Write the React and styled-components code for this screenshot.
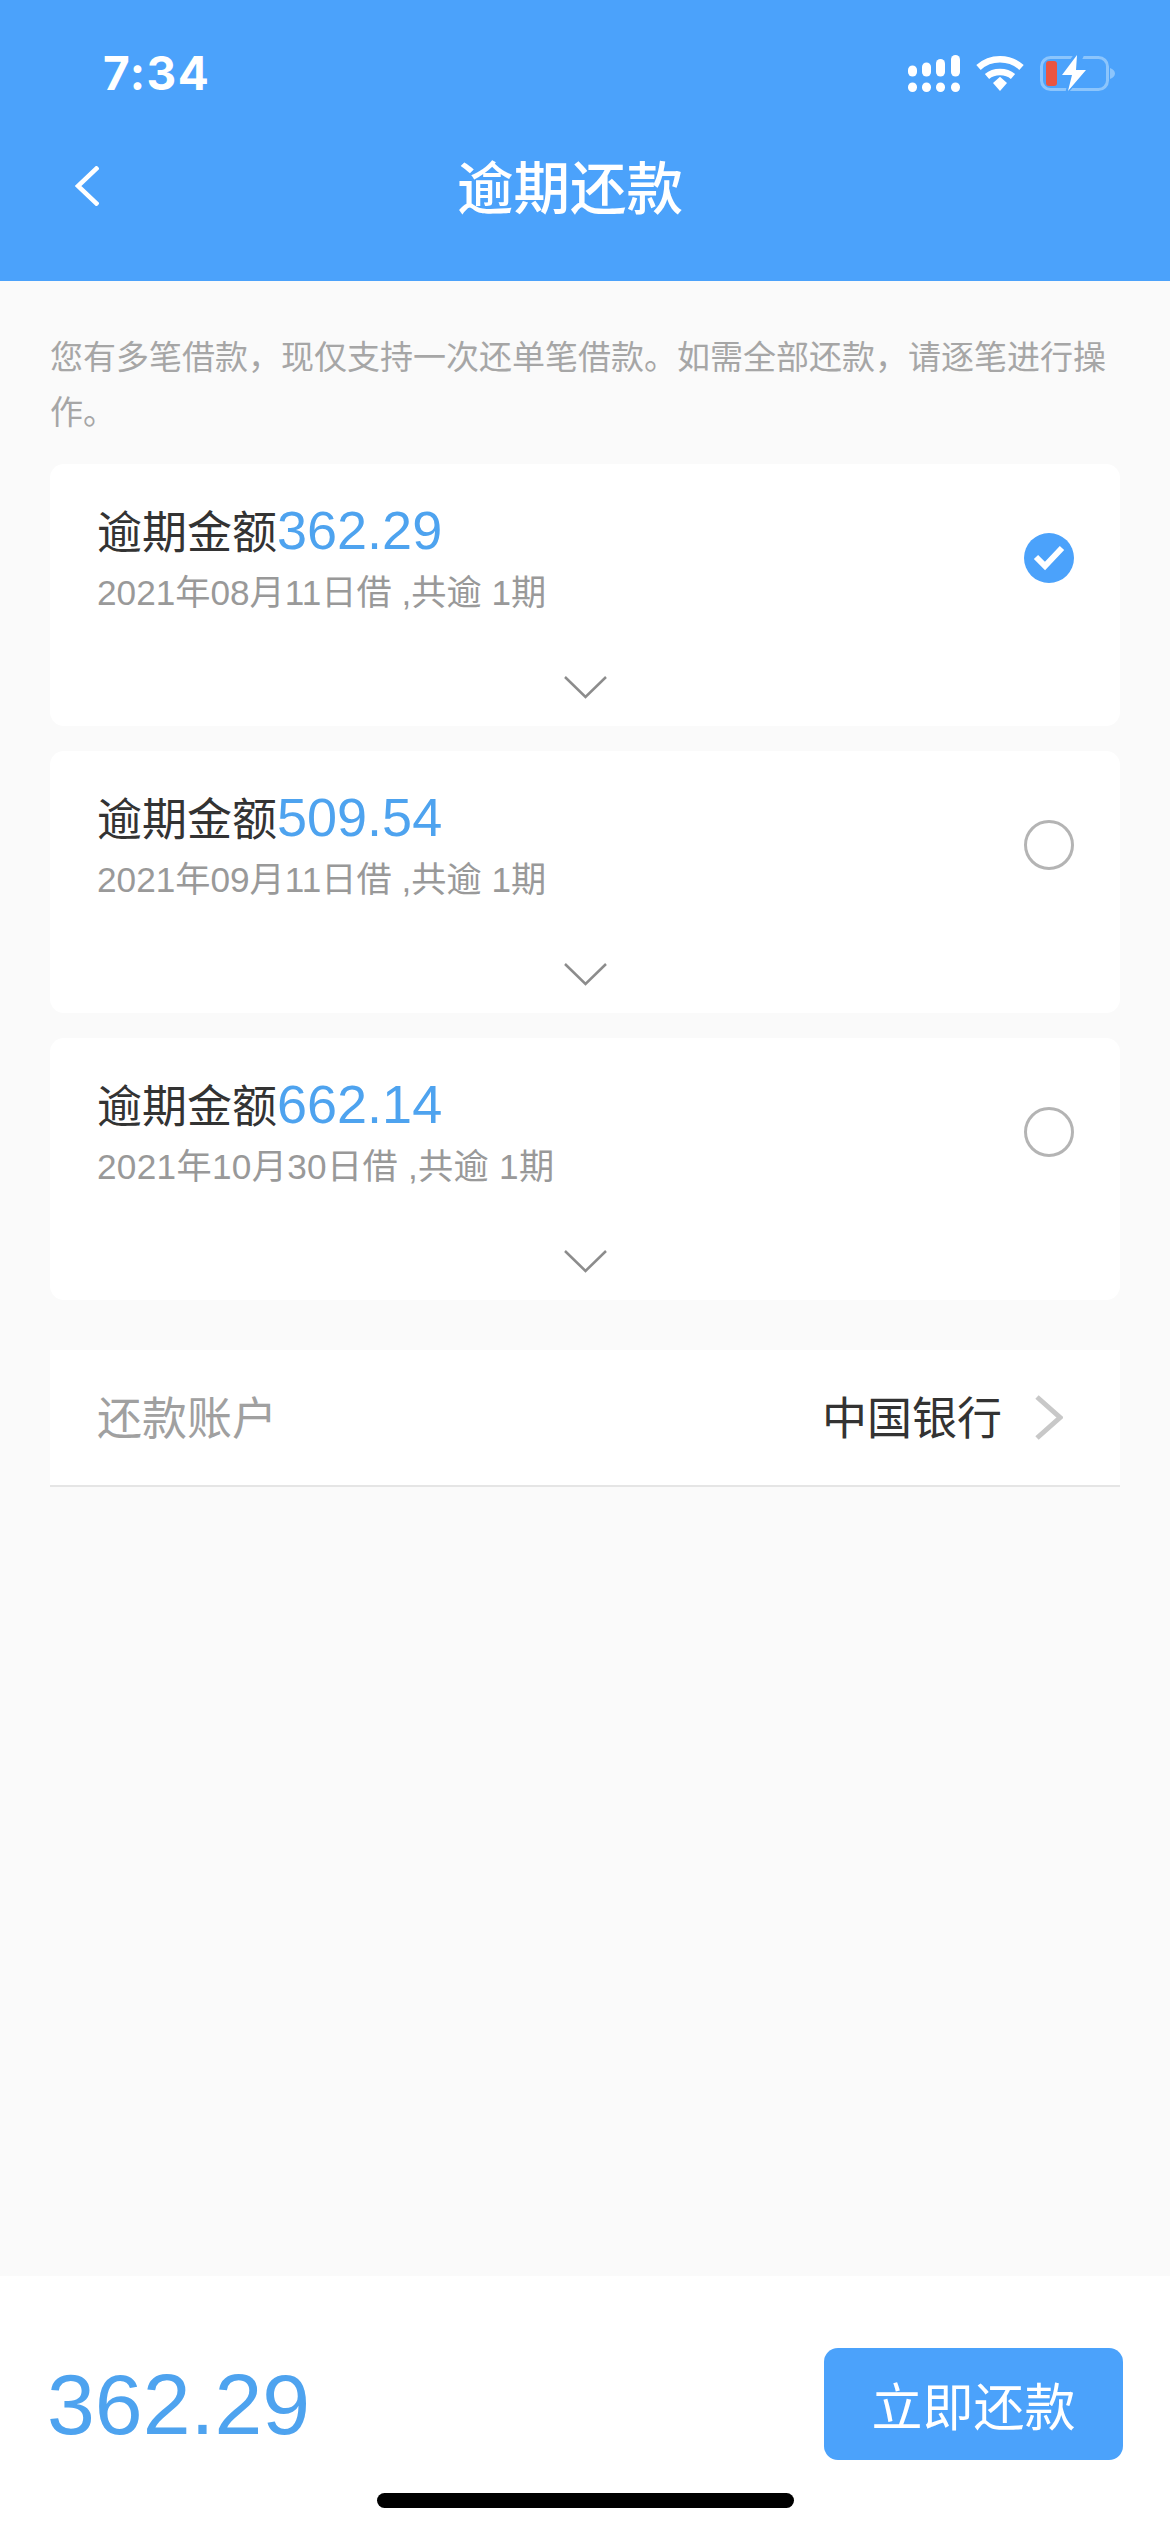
import React from 'react';
import styled, { createGlobalStyle } from 'styled-components';

const blue = '#4ba2fb';

const GlobalStyle = createGlobalStyle`
    html, body {
        margin: 0;
        padding: 0;
        background: #fafafa;
    }
    * {
        box-sizing: border-box;
    }
`;

const Page = styled.div`
    width: 1170px;
    height: 2532px;
    display: flex;
    flex-direction: column;
    background: #fafafa;
    font-family: "Liberation Sans", "Noto Sans CJK SC", sans-serif;
    overflow: hidden;
`;

const Header = styled.header`
    height: 281px;
    flex: none;
    background: ${blue};
    color: #fff;
`;

const StatusBar = styled.div`
    height: 160px;
    padding: 50px 55px 0 103px;
    display: flex;
    justify-content: space-between;
    align-items: flex-start;
`;

const Time = styled.div`
    font-family: Inter, "Liberation Sans", sans-serif;
    font-weight: 700;
    font-size: 46px;
    letter-spacing: 1.5px;
    line-height: 47px;
`;

const StatusIcons = styled.div`
    display: flex;
    align-items: center;
    gap: 16px;
    padding-top: 4px;
`;

const NavBar = styled.div`
    display: flex;
    align-items: center;
    height: 52px;
    padding-left: 75px;
    gap: 358px;
`;

const NavTitle = styled.h1`
    margin: -5px 0 0;
    font-size: 56.5px;
    line-height: 52px;
    font-weight: 500;
    font-family: "Noto Sans CJK SC", sans-serif;
`;

const Main = styled.main`
    flex: 1;
    padding: 47px 50px 0;
`;

const Notice = styled.p`
    margin: 0 0 26px;
    font-family: "Noto Sans CJK SC", sans-serif;
    font-size: 33px;
    line-height: 55px;
    color: #a6a6a6;
`;

const CardList = styled.div`
    display: flex;
    flex-direction: column;
    gap: 25px;
`;

const Card = styled.section`
    height: 262px;
    background: #fff;
    border-radius: 14px;
    padding: 36px 47px 0;
    display: flex;
    flex-direction: column;
`;

const CardRow = styled.div`
    display: flex;
    justify-content: space-between;
    align-items: center;
`;

const AmountLine = styled.div`
    font-size: 45px;
    line-height: 60px;
    color: #333;
    font-family: "Noto Sans CJK SC", sans-serif;
`;

const AmountValue = styled.span`
    font-family: "Liberation Sans", sans-serif;
    font-size: 54px;
    color: #4ea3ef;
`;

const DateLine = styled.div`
    margin-top: 11px;
    font-size: 35.2px;
    line-height: 44px;
    letter-spacing: ${props => props.$tracking || 0}px;
    color: #999;
`;

const Radio = styled.span`
    width: 50px;
    height: 50px;
    border-radius: 50%;
    display: flex;
    align-items: center;
    justify-content: center;
    margin-right: -1px;
    border: ${props => props.checked ? 'none' : '3px solid #b4b4b4'};
    background: ${props => props.checked ? blue : '#fff'};
`;

const Expand = styled.div`
    display: flex;
    justify-content: center;
    margin-top: 61px;
`;

const AccountRow = styled.div`
    margin-top: 50px;
    height: 137px;
    padding: 0 57px 0 47px;
    background: #fff;
    border-bottom: 2px solid #e5e5e5;
    display: flex;
    align-items: center;
    font-family: "Noto Sans CJK SC", sans-serif;
    font-size: 45px;
    line-height: 60px;
`;

const AccountLabel = styled.span`
    flex: 1;
    margin-top: -3px;
    color: #a0a0a0;
`;

const AccountValue = styled.span`
    color: #333;
    margin: -3px 33px 0 0;
`;

const Footer = styled.footer`
    height: 256px;
    flex: none;
    background: #fff;
    padding: 72px 47px 0 47px;
    display: flex;
    flex-direction: column;
`;

const PayRow = styled.div`
    display: flex;
    justify-content: space-between;
    align-items: center;
`;

const Total = styled.div`
    font-size: 86px;
    line-height: 100px;
    color: #4ea3ef;
`;

const PayButton = styled.button`
    width: 299px;
    height: 112px;
    border: none;
    border-radius: 14px;
    background: ${blue};
    color: #fff;
    font-family: "Noto Sans CJK SC", sans-serif;
    font-size: 51px;
`;

const HomeIndicator = styled.div`
    width: 417px;
    height: 15px;
    margin: 33px auto 0;
    border-radius: 8px;
    background: #000;
`;

const SignalIcon = () => (
    <svg width="52" height="37" viewBox="0 0 52 37" fill="#fff">
        <rect x="0" y="10.5" width="9" height="11" rx="4.5" />
        <rect x="14" y="7.5" width="9" height="14" rx="4.5" />
        <rect x="28" y="4" width="9" height="17.5" rx="4.5" />
        <rect x="43" y="0" width="9" height="21.5" rx="4.5" />
        <rect x="0" y="27.5" width="9" height="9.5" rx="4.5" />
        <rect x="14" y="27.5" width="9" height="9.5" rx="4.5" />
        <rect x="28" y="27.5" width="9" height="9.5" rx="4.5" />
        <rect x="43" y="27.5" width="9" height="9.5" rx="4.5" />
    </svg>
);

const WifiIcon = () => (
    <svg width="48" height="36" viewBox="0 0 48 36" fill="none" stroke="#fff" strokeWidth="6.5">
        <path d="M2.5 12.5C14.5 1.5 33.5 1.5 45.5 12.5" />
        <path d="M11 21.5C18 15.5 30 15.5 37 21.5" />
        <path d="M17 28L24 21.8L31 28L24 36Z" fill="#fff" stroke="none" />
    </svg>
);

const BatteryIcon = () => (
    <svg width="75" height="38" viewBox="0 0 75 38" fill="none">
        <rect x="1.5" y="3.5" width="66" height="32" rx="9" stroke="#8cc5fc" strokeWidth="3" />
        <path d="M70 14C73 15 75 17 75 19.5C75 22 73 24 70 25Z" fill="#8cc5fc" />
        <rect x="6" y="7" width="11" height="25" rx="3" fill="#ea5440" />
        <path d="M36 0L21 21H31L27 38L47 15H36L43 0Z" fill="#4ba2fb" stroke="#4ba2fb" strokeWidth="3" />
        <path d="M37 1L22 21H32L28 37L46 16H36Z" fill="#fff" />
    </svg>
);

const BackIcon = () => (
    <svg width="24" height="40" viewBox="0 0 24 40" fill="none" stroke="#fff" strokeWidth="4.5">
        <path d="M23 1L3 20L23 39" />
    </svg>
);

const CheckIcon = () => (
    <svg width="32" height="26" viewBox="0 0 32 26" fill="none" stroke="#fff" strokeWidth="6">
        <path d="M3 12L12 21L29 3" />
    </svg>
);

const ExpandIcon = () => (
    <svg width="43" height="23" viewBox="0 0 43 23" fill="none" stroke="#8c8c8c" strokeWidth="2.5">
        <path d="M1 1L21.5 21L42 1" />
    </svg>
);

const ForwardIcon = () => (
    <svg width="28" height="45" viewBox="0 0 28 45" fill="none" stroke="#c8c8c8" strokeWidth="5">
        <path d="M2 2L25 22.5L2 43" />
    </svg>
);

const loans = [
    { amount: '362.29', date: '2021年08月11日借 ,共逾 1期', checked: true },
    { amount: '509.54', date: '2021年09月11日借 ,共逾 1期', checked: false },
    { amount: '662.14', date: '2021年10月30日借 ,共逾 1期', checked: false, tracking: 0.3 }
];

export default function App() {
    return (
        <Page>
            <GlobalStyle />
            <Header>
                <StatusBar>
                    <Time>7:34</Time>
                    <StatusIcons>
                        <SignalIcon />
                        <WifiIcon />
                        <BatteryIcon />
                    </StatusIcons>
                </StatusBar>
                <NavBar>
                    <BackIcon />
                    <NavTitle>逾期还款</NavTitle>
                </NavBar>
            </Header>
            <Main>
                <Notice>您有多笔借款，现仅支持一次还单笔借款。如需全部还款，请逐笔进行操作。</Notice>
                <CardList>
                    {loans.map(loan => (
                        <Card key={loan.amount}>
                            <CardRow>
                                <div>
                                    <AmountLine>逾期金额<AmountValue>{loan.amount}</AmountValue></AmountLine>
                                    <DateLine $tracking={loan.tracking}>{loan.date}</DateLine>
                                </div>
                                <Radio checked={loan.checked}>
                                    {loan.checked && <CheckIcon />}
                                </Radio>
                            </CardRow>
                            <Expand>
                                <ExpandIcon />
                            </Expand>
                        </Card>
                    ))}
                </CardList>
                <AccountRow>
                    <AccountLabel>还款账户</AccountLabel>
                    <AccountValue>中国银行</AccountValue>
                    <ForwardIcon />
                </AccountRow>
            </Main>
            <Footer>
                <PayRow>
                    <Total>362.29</Total>
                    <PayButton>立即还款</PayButton>
                </PayRow>
                <HomeIndicator />
            </Footer>
        </Page>
    );
}
